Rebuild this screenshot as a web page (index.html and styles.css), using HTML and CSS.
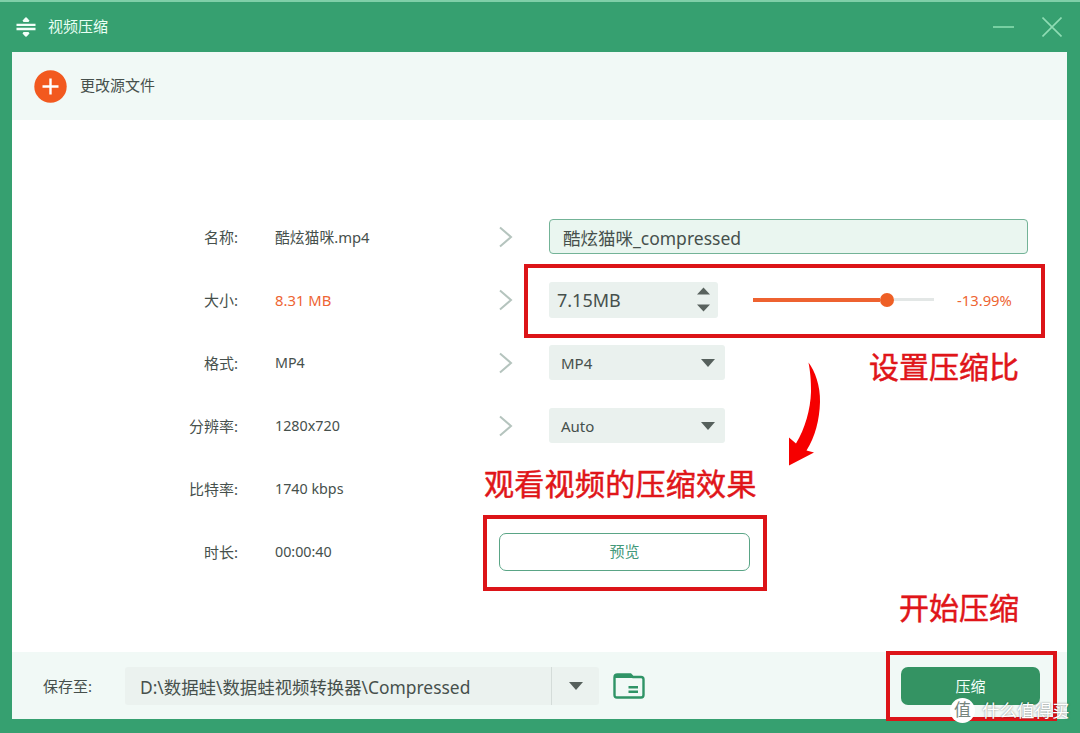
FILE: index.html
```html
<!DOCTYPE html>
<html lang="zh-CN">
<head>
    <meta charset="UTF-8">
    <title>视频压缩</title>
    <link rel="stylesheet" href="styles.css">
</head>
<body>
    <div class="window">
        <header class="titlebar">
            <svg class="app-icon" width="20" height="20" viewBox="0 0 20 20">
                <path d="M.5 7.800h19M.5 12h19" stroke="#f3fff9" stroke-width="2.300"/>
                <path d="M10 1v4M10 15v4" stroke="#f3fff9" stroke-width="2.400"/>
                <path d="M6.500 3.500L10 0l3.500 3.500-1 1.500h-5zM6.500 16.500L10 20l3.500-3.500-1-1.500h-5z" fill="#f3fff9"/>
            </svg>
            <span class="title">视频压缩</span>
            <div class="window-buttons">
                <svg width="22" height="20" viewBox="0 0 22 20"><path d="M0 10h21" stroke="#7fd6a9" stroke-width="1.8"/></svg>
                <svg width="20" height="20" viewBox="0 0 20 20"><path d="M.5.5l19 19M19.500.5l-19 19" stroke="#8fdcb4" stroke-width="1.6"/></svg>
            </div>
        </header>

        <div class="panel">
            <div class="toolbar">
                <svg width="33" height="33" viewBox="0 0 33 33">
                    <circle cx="16.500" cy="16.500" r="16.200" fill="#f2591f"/>
                    <path d="M16.500 8.500v16M8.500 16.500h16" stroke="#fff" stroke-width="2.400"/>
                </svg>
                <span>更改源文件</span>
            </div>

            <main class="form">
                <div class="row">
                    <label>名称:</label>
                    <span class="value file-name">酷炫猫咪.mp4</span>
                    <svg class="chevron" width="14" height="22" viewBox="0 0 14 22"><path d="M1 1.500L12 11 1 20.500"/></svg>
                    <div class="name-input">酷炫猫咪_compressed</div>
                </div>
                <div class="row">
                    <label>大小:</label>
                    <span class="value size orange">8.31 MB</span>
                    <svg class="chevron" width="14" height="22" viewBox="0 0 14 22"><path d="M1 1.500L12 11 1 20.500"/></svg>
                    <div class="size-control">
                        <div class="spinner">
                            <span>7.15MB</span>
                            <svg width="13" height="25" viewBox="0 0 13 25"><path d="M0 7.500L6.500 0.500 13 7.500zM0 17.500h13L6.500 24.500z" fill="#59625e"/></svg>
                        </div>
                        <div class="slider"><div class="slider-fill"></div><div class="slider-thumb"></div><div class="slider-rest"></div></div>
                        <span class="percent orange">-13.99%</span>
                    </div>
                </div>
                <div class="row">
                    <label>格式:</label>
                    <span class="value">MP4</span>
                    <svg class="chevron" width="14" height="22" viewBox="0 0 14 22"><path d="M1 1.500L12 11 1 20.500"/></svg>
                    <div class="select"><span>MP4</span><i class="caret"></i></div>
                </div>
                <div class="row">
                    <label>分辨率:</label>
                    <span class="value">1280x720</span>
                    <svg class="chevron" width="14" height="22" viewBox="0 0 14 22"><path d="M1 1.500L12 11 1 20.500"/></svg>
                    <div class="select"><span>Auto</span><i class="caret"></i></div>
                </div>
                <div class="row">
                    <label>比特率:</label>
                    <span class="value">1740 kbps</span>
                </div>
                <div class="row">
                    <label>时长:</label>
                    <span class="value">00:00:40</span>
                    <button class="preview-button">预览</button>
                </div>
            </main>

            <footer class="footer">
                <span class="save-label">保存至:</span>
                <div class="path-box">
                    <span class="path">D:\数据蛙\数据蛙视频转换器\Compressed</span>
                    <div class="path-drop"><i class="caret"></i></div>
                </div>
                <svg class="folder" width="32" height="26" viewBox="0 0 32 26">
                    <path d="M1.500 4.500Q1.500 1.500 4.500 1.500H17.500L20 4H28Q30.500 4 30.500 6.500V22Q30.500 24.500 28 24.500H4Q1.500 24.500 1.500 22Z" fill="none" stroke="#2f9466" stroke-width="2.400"/>
                    <path d="M2 2h16l2.500 3H2z" fill="#2f9466"/>
                    <path d="M15.500 14.300h9.500M15.500 18.800h9.500" stroke="#2f9466" stroke-width="2.600"/>
                </svg>
                <button class="compress-button">压缩</button>
            </footer>
        </div>

        <!-- tutorial marks over the window -->
        <div class="mark mark-size"></div>
        <div class="mark mark-preview"></div>
        <div class="mark mark-compress"></div>
        <span class="note note-ratio">设置压缩比</span>
        <span class="note note-preview">观看视频的压缩效果</span>
        <span class="note note-start">开始压缩</span>
        <svg class="arrow" width="36" height="106" viewBox="0 0 36 106">
            <path d="M20.500 .5C27 9 32.500 24 32 40C31.500 58 27 75 18.500 88.500L26 90.500L1 103.500V75.500L8 81.500C17 67 22.500 47 23 30C23.200 18 22 8 20.500 .5Z" fill="#f60000"/>
        </svg>
        <div class="watermark"><span class="badge">值</span><span>什么值得买</span></div>
    </div>
</body>
</html>
```
FILE: styles.css
```css
* {
    box-sizing: border-box;
}
body {
    margin: 0;
    font-family: "Noto Sans", "Noto Sans CJK SC", sans-serif;
    font-size: 15px;
    color: #46504c;
}
.window {
    position: relative;
    display: flex;
    flex-direction: column;
    width: 1080px;
    height: 733px;
    padding: 0 13px 14px 12px;
    background-color: #36a070;
    border-top: 2px solid #7fcfa8;
    overflow: hidden;
}
.titlebar {
    display: flex;
    align-items: center;
    height: 50px;
    padding: 0 5px 0 4px;
    color: #e9fff4;
}
.title {
    margin-left: 12px;
    padding-bottom: 3px;
}
.window-buttons {
    display: flex;
    gap: 27px;
    margin-left: auto;
}
.panel {
    display: flex;
    flex-direction: column;
    flex: 1;
    background-color: #fff;
}
.toolbar {
    display: flex;
    align-items: center;
    gap: 13px;
    height: 68px;
    padding: 0 22px;
    background-color: #f1f9f6;
}
.toolbar span {
    padding-bottom: 3px;
}
.form {
    flex: 1;
    padding-top: 85px;
}
.row {
    display: grid;
    grid-template-columns: 228px 35px 224px 50px 1fr;
    align-items: center;
    height: 63px;
}
.row label {
    padding-right: 2px;
    text-align: right;
}
.value {
    grid-column: 3;
    font-size: 14.3px;
}
.file-name {
    font-size: 14.8px;
}
.size {
    font-size: 14.8px;
}
.orange {
    color: #ee6533;
}
.chevron {
    fill: none;
    stroke: #b5c4be;
    stroke-width: 2;
}
.name-input {
    width: 479px;
    height: 35px;
    padding-left: 13px;
    line-height: 36px;
    font-size: 17.5px;
    background-color: #eaf6f0;
    border: 1.5px solid #73b397;
    border-radius: 4px;
}
.size-control {
    display: flex;
    align-items: center;
}
.spinner {
    display: flex;
    align-items: center;
    justify-content: space-between;
    width: 169px;
    height: 36px;
    padding: 0 8px;
    font-size: 18px;
    background-color: #eaf1ee;
    border-radius: 3px;
}
.slider {
    display: flex;
    align-items: center;
    width: 181px;
    margin: 0 23px 0 35px;
}
.slider-fill {
    width: 127px;
    height: 4px;
    background-color: #ee6230;
}
.slider-thumb {
    width: 14px;
    height: 14px;
    border-radius: 50%;
    background-color: #ee5f25;
}
.slider-rest {
    flex: 1;
    height: 3px;
    background-color: #e3e7e6;
}
.percent {
    font-size: 14.8px;
}
.select {
    display: flex;
    align-items: center;
    justify-content: space-between;
    width: 176px;
    height: 35px;
    padding: 0 10px 0 12px;
    background-color: #eaf1ee;
    border-radius: 3px;
}
.caret {
    border: 7px solid transparent;
    border-top: 8px solid #56605c;
    border-bottom: 0;
}
button {
    font-family: inherit;
    font-size: 15px;
    padding: 0;
}
.preview-button {
    grid-column: 4 / span 2;
    width: 251px;
    height: 38px;
    padding-bottom: 2px;
    color: #43997a;
    background-color: #fff;
    border: 1.5px solid #5aa586;
    border-radius: 7px;
}
.footer {
    display: flex;
    align-items: center;
    height: 67px;
    padding: 0 27px 0 31px;
    background-color: #f1f9f6;
}
.save-label {
    width: 82px;
}
.path-box {
    display: flex;
    width: 474px;
    height: 38px;
    background-color: #ebf2ef;
    border-radius: 3px;
}
.path {
    flex: 1;
    padding-left: 15px;
    line-height: 41px;
    font-size: 17.4px;
    white-space: nowrap;
}
.path-drop {
    display: flex;
    align-items: center;
    justify-content: center;
    width: 48px;
    border-left: 1px solid #d4dcd9;
}
.folder {
    margin-left: 14px;
}
.compress-button {
    width: 139px;
    height: 38px;
    margin-left: auto;
    color: #f3fff9;
    background-color: #349363;
    border: none;
    border-radius: 7px;
}
.mark {
    position: absolute;
    border: 4px solid #dc1418;
}
.mark-size {
    left: 524px;
    top: 262px;
    width: 521px;
    height: 74px;
}
.mark-preview {
    left: 483px;
    top: 513px;
    width: 284px;
    height: 76px;
}
.mark-compress {
    left: 886px;
    top: 649px;
    width: 171px;
    height: 70px;
}
.note {
    position: absolute;
    font-size: 30px;
    line-height: 40px;
    color: #e01519;
    -webkit-text-stroke: 0.5px #e01519;
    white-space: nowrap;
}
.note-ratio {
    left: 869px;
    top: 345px;
}
.note-preview {
    left: 484px;
    top: 462px;
    letter-spacing: 0.3px;
}
.note-start {
    left: 899px;
    top: 586px;
}
.arrow {
    position: absolute;
    left: 788px;
    top: 360px;
}
.watermark {
    position: absolute;
    left: 950px;
    top: 695px;
    display: flex;
    align-items: center;
    gap: 7px;
    font-size: 17.5px;
    line-height: 26px;
    color: #fff;
    text-shadow: 0 0 2px rgba(0, 0, 0, 0.5);
    white-space: nowrap;
}
.badge {
    width: 25px;
    height: 25px;
    border-radius: 50%;
    background-color: #fff;
    color: #76857e;
    font-size: 17px;
    line-height: 24px;
    text-align: center;
    text-shadow: none;
}
```
